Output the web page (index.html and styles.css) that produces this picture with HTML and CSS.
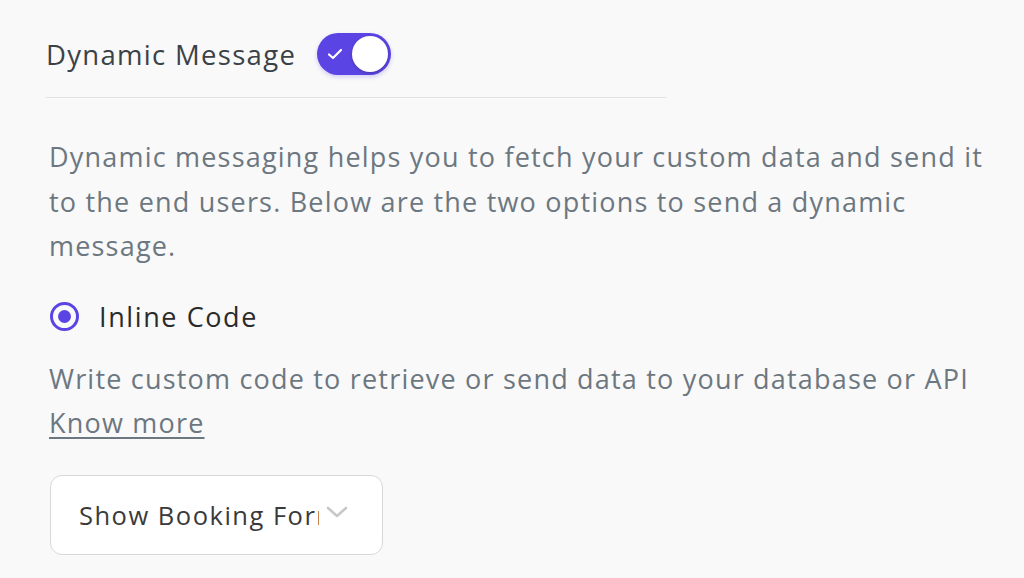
FILE: index.html
```html
<!DOCTYPE html>
<html>
<head>
<meta charset="utf-8">
<link rel="stylesheet" href="styles.css">
</head>
<body>
<div class="panel">
  <div class="header">
    <span class="title">Dynamic Message</span>
    <span class="toggle">
      <svg class="check" width="16" height="12" viewBox="0 0 16 12"><path d="M2 6.5 L6 10 L14 2" fill="none" stroke="#fff" stroke-width="2.2" stroke-linecap="round" stroke-linejoin="round"/></svg>
      <span class="knob"></span>
    </span>
  </div>
  <div class="divider"></div>
  <p class="desc">Dynamic messaging helps you to fetch your custom data and send it to the end users. Below are the two options to send a dynamic message.</p>
  <div class="option">
    <span class="radio"><span class="dot"></span></span>
    <span class="option-label">Inline Code</span>
  </div>
  <p class="desc2">Write custom code to retrieve or send data to your database or API <a class="link" href="#">Know more</a></p>
  <div class="select">
    <span class="select-text">Show Booking Form</span>
    <svg class="chev" width="22" height="12" viewBox="0 0 22 12"><path d="M2 2 L11 10 L20 2" fill="none" stroke="#c8c8c8" stroke-width="2.6" stroke-linecap="round" stroke-linejoin="round"/></svg>
  </div>
</div>
</body>
</html>
```
FILE: styles.css
```css
html, body {
  margin: 0;
  padding: 0;
  background: #f9f9f9;
}
body {
  width: 1024px;
  height: 578px;
  overflow: hidden;
  font-family: "Open Sans", Lato, sans-serif;
}
.panel {
  padding: 30px 0 0 46px;
}
.header {
  display: flex;
  align-items: center;
  height: 48px;
}
.title {
  font-size: 27.5px;
  color: #3b4247;
  letter-spacing: 1.3px;
}
.toggle {
  margin-left: 21px;
  width: 74px;
  height: 42px;
  border-radius: 21px;
  background: #5a44e3;
  display: flex;
  align-items: center;
  justify-content: space-between;
  padding: 0 3px 0 10px;
  box-sizing: border-box;
  box-shadow: 0 2px 4px rgba(90, 68, 227, 0.25);
}
.check {
  display: block;
}
.knob {
  width: 36px;
  height: 36px;
  border-radius: 50%;
  background: #fff;
  box-shadow: 0 1px 3px rgba(0,0,0,0.25);
}
.divider {
  margin-top: 19px;
  width: 620px;
  height: 1px;
  background: #e2e2e2;
}
.desc, .desc2 {
  margin: 0;
  font-size: 27px;
  line-height: 44.5px;
  color: #6c7780;
  letter-spacing: 1.2px;
  width: 955px;
  padding-left: 3px;
}
.desc {
  margin-top: 37px;
}
.option {
  display: flex;
  align-items: center;
  margin-top: 29px;
  padding-left: 4px;
}
.radio {
  width: 29px;
  height: 29px;
  box-sizing: border-box;
  border: 3px solid #5a44e3;
  border-radius: 50%;
  display: flex;
  align-items: center;
  justify-content: center;
}
.dot {
  width: 13px;
  height: 13px;
  border-radius: 50%;
  background: #5a44e3;
}
.option-label {
  margin-left: 20px;
  font-size: 27px;
  color: #2b2b2b;
  letter-spacing: 1.6px;
}
.desc2 {
  margin-top: 22px;
}
.link {
  color: #6c7780;
  text-decoration: underline;
  text-underline-offset: 4px;
}
.select {
  margin-top: 29px;
  margin-left: 4px;
  width: 333px;
  height: 80px;
  box-sizing: border-box;
  border: 1.5px solid #d8d8d8;
  border-radius: 12px;
  background: #fff;
  display: flex;
  align-items: center;
  padding-left: 28px;
}
.select-text {
  font-size: 25.5px;
  color: #3a3a3a;
  letter-spacing: 1.5px;
  width: 240px;
  overflow: hidden;
  white-space: nowrap;
}
.chev {
  margin-left: 7px;
  margin-top: -6px;
}
```
